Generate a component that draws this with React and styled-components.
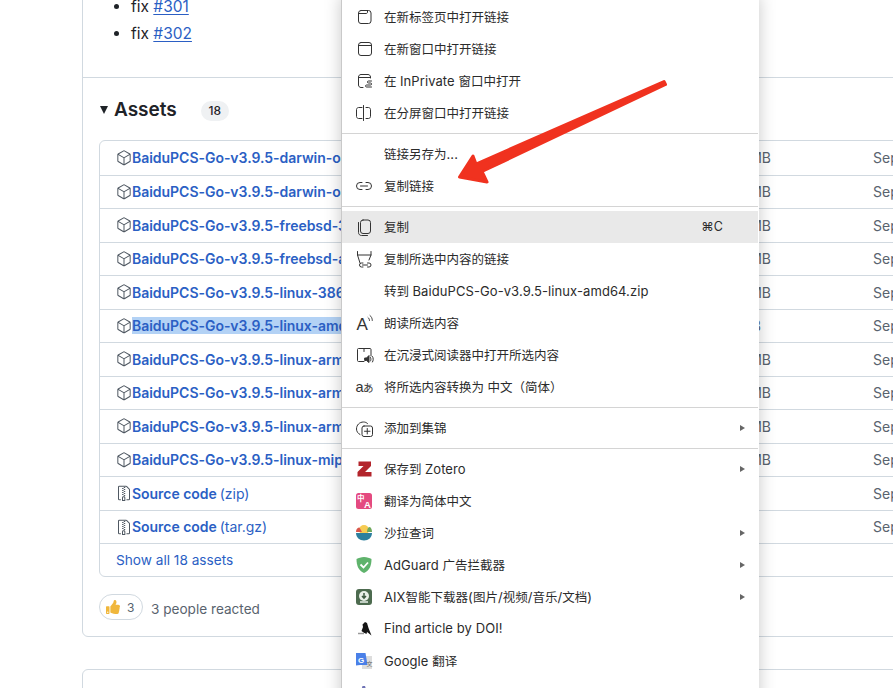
import React from "react";
import styled, { createGlobalStyle } from "styled-components";
import { GoPackage, GoFileZip } from "react-icons/go";
import { FaThumbsUp } from "react-icons/fa";

const GlobalStyle = createGlobalStyle`
  html, body {
    margin: 0;
    padding: 0;
    background: #fff;
  }
  body {
    font-family: Inter, "Liberation Sans", sans-serif;
    color: #1f2328;
  }
`;

const Page = styled.div`
  position: relative;
  width: 893px;
  height: 688px;
  overflow: hidden;
  padding-left: 82px;
  box-sizing: border-box;
`;

const Card = styled.section`
  width: 1000px;
  box-sizing: border-box;
  border: 1px solid #d1d9e0;
  border-radius: 6px;
  margin-top: -30px;
  height: 667px;
`;

const NextCard = styled.section`
  width: 1000px;
  height: 60px;
  box-sizing: border-box;
  border: 1px solid #d1d9e0;
  border-radius: 6px;
  margin-top: 32px;
`;

const Notes = styled.div`
  height: 107px;
  box-sizing: border-box;
  border-bottom: 1px solid #d1d9e0;
`;

const List = styled.ul`
  margin: 0;
  padding: 22px 0 0 48px;
  list-style: disc;
  font-size: 15.5px;
  line-height: 27px;
`;

const IssueLink = styled.a`
  color: #2b5fc4;
  text-decoration: underline;
  text-underline-offset: 2px;
`;

const Assets = styled.div`
  padding: 0 16px;
`;

const AssetsHead = styled.div`
  display: flex;
  align-items: center;
  height: 22px;
  margin-top: 20px;
`;

const Caret = styled.span`
  width: 0;
  height: 0;
  border-left: 4.5px solid transparent;
  border-right: 4.5px solid transparent;
  border-top: 8px solid #1f2328;
  margin: 2px 6px 0 1px;
`;

const AssetsTitle = styled.h3`
  margin: 2px 0 0;
  font-size: 19px;
  line-height: 22px;
  font-weight: 600;
`;

const CountBadge = styled.span`
  margin-left: 24px;
  margin-top: 4px;
  width: 28px;
  height: 20px;
  border-radius: 10px;
  background: #eff1f3;
  font-size: 12px;
  font-weight: 500;
  line-height: 20px;
  text-align: center;
`;

const AssetBox = styled.div`
  margin-top: 20px;
  border: 1px solid #d1d9e0;
  border-radius: 6px;
`;

const AssetRow = styled.div`
  display: grid;
  grid-template-columns: 551px 120px 102px 1fr;
  align-items: center;
  height: 33.5px;
  box-sizing: border-box;
  font-size: 14px;
  & + & {
    border-top: 1px solid #d1d9e0;
  }
`;

const AssetName = styled.a`
  display: flex;
  align-items: center;
  padding-left: 16px;
  color: #2b5fc4;
  font-weight: 600;
  letter-spacing: -0.03px;
  white-space: nowrap;
  svg {
    color: #4f5862;
    flex: none;
  }
`;

const Ext = styled.span`
  font-weight: 400;
  margin-left: 3px;
`;

const AssetSize = styled.span`
  color: #59636e;
  text-align: right;
  white-space: nowrap;
  padding-right: ${(p) => (p.$selected ? "10px" : "0")};
`;

const AssetDate = styled.span`
  grid-column: 4;
  color: #59636e;
  white-space: nowrap;
`;

const ShowAll = styled.a`
  display: flex;
  align-items: center;
  height: 32px;
  border-top: 1px solid #d1d9e0;
  padding-left: 16px;
  color: #2b5fc4;
  font-size: 13.65px;
`;

const Reactions = styled.div`
  display: flex;
  align-items: center;
  gap: 8px;
  margin-top: 17px;
  font-size: 13.6px;
  color: #59636e;
`;

const ReactionPill = styled.span`
  display: flex;
  align-items: center;
  gap: 7px;
  width: 44px;
  height: 26px;
  box-sizing: border-box;
  padding-left: 6px;
  border: 1px solid #d1d9e0;
  border-radius: 13px;
  font-size: 12px;
  svg {
    color: #f0b73c;
  }
`;

const ReactedText = styled.span`
  margin-top: 3px;
`;

const Menu = styled.nav`
  position: absolute;
  top: -4px;
  left: 341px;
  width: 418px;
  height: 760px;
  box-sizing: border-box;
  padding: 5px 1px 0 0;
  background: #fff;
  border-left: 1px solid #c9c9c9;
  box-shadow: 0 0 16px rgba(0, 0, 0, 0.22);
  font-family: Inter, "Noto Sans CJK SC", sans-serif;
  font-size: 12.5px;
  color: #2b2b2b;
`;

const MenuRow = styled.div`
  display: flex;
  align-items: center;
  height: 32px;
  padding: 0 10px 0 12px;
  gap: 10px;
  white-space: nowrap;
  background: ${(p) => (p.$active ? "#e9e9e9" : "transparent")};
`;

const IconSlot = styled.span`
  flex: none;
  width: 20px;
  height: 20px;
  display: flex;
  margin-top: -1px;
  svg {
    display: block;
  }
`;

const MenuLabel = styled.span`
  flex: 1;
  padding-bottom: 2px;
`;

const Latin = styled.span`
  font-size: 13px;
  letter-spacing: 0.08px;
`;

const Shortcut = styled.span`
  margin-right: 25px;
  font-size: 12.5px;
  padding-bottom: 2px;
`;

const Chevron = styled.span`
  width: 0;
  height: 0;
  margin-right: 3px;
  border-top: 3.5px solid transparent;
  border-bottom: 3.5px solid transparent;
  border-left: 5px solid #666;
`;

const Separator = styled.div`
  height: 1px;
  margin: 4px 0;
  background: #d4d4d4;
`;

const Arrow = styled.svg`
  position: absolute;
  top: 0;
  left: 0;
  pointer-events: none;
`;

const Line = ({ children }) => (
  <svg width="20" height="20" viewBox="0 0 20 20" fill="none" stroke="#333" strokeWidth="1" strokeLinecap="round" strokeLinejoin="round">
    {children}
  </svg>
);

const NewTabIcon = () => (
  <Line>
    <rect x="4.5" y="3.5" width="12.5" height="13" rx="2.5" />
    <path d="M4.5 6.5H12c1 0 1.5-.5 1.5-1.5V3.5" />
  </Line>
);
const NewWindowIcon = () => (
  <Line>
    <rect x="4.5" y="3.5" width="13" height="13" rx="2.5" />
    <path d="M4.5 6.5h13" />
  </Line>
);
const PrivateIcon = () => (
  <Line>
    <path d="M9 16.500H7c-1.400 0-2.500-1.100-2.500-2.500V6C4.500 4.600 5.600 3.500 7 3.500h7c1.400 0 2.500 1.100 2.500 2.500v1" />
    <path d="M4.500 6.500h12" />
    <path d="M17.500 10h-3c-1.500 0-1.500 2 0 2h2c1.500 0 1.500 2 0 2h-4c-1.300 0-1.300 2 0 2h5" />
  </Line>
);
const SplitIcon = () => (
  <Line>
    <path d="M8 4.500H4.500c-1 0-2 1-2 2v7c0 1 1 2 2 2H8" />
    <path d="M12 4.500h2.500c1 0 2 1 2 2v7c0 1-1 2-2 2H12" />
    <path d="M9.500 2.500v15" />
  </Line>
);
const LinkIcon = () => (
  <Line>
    <path d="M8 6.500H6a3.500 3.500 0 0 0 0 7h2" />
    <path d="M12 6.500h2a3.500 3.500 0 0 1 0 7h-2" />
    <path d="M6.500 10h7" />
  </Line>
);
const CopyIcon = () => (
  <Line>
    <rect x="6.500" y="3" width="10" height="13.500" rx="2.500" />
    <path d="M4.500 5.500v10c0 1.600 1.200 3 3 3h6" />
  </Line>
);
const CopyLinkIcon = () => (
  <Line>
    <path d="M3.500 2.500v3.500l2.500 8M17 2.500V6l-2 5M3.500 6h13.500" />
    <path d="M9 14H7.500a2 2 0 0 0 0 4H9M13.500 14H15a2 2 0 0 1 0 4h-1.500M8.500 16h5" />
  </Line>
);
const ReadIcon = () => (
  <svg width="20" height="20" viewBox="0 0 20 20" fill="none" stroke="#333" strokeWidth="0.9" strokeLinecap="round">
    <text x="2.500" y="16.500" fontFamily="Liberation Sans, sans-serif" fontSize="17" fill="#333" stroke="none">A</text>
    <path d="M14 4.500c1 .8 1.500 1.800 1.500 3M16 2.500c1.500 1.200 2.300 2.800 2.300 5" />
  </svg>
);
const ReaderIcon = () => (
  <Line>
    <path d="M10 16.500H4.500c-.6 0-1-.4-1-1V4.500c0-.6.4-1 1-1h11.500c.6 0 1 .4 1 1V11" />
    <path d="M10 3.500v3" />
    <path d="M11 13h1.500l2.500-2.500v7L12.500 15.500H11z" fill="#333" />
    <path d="M16.500 12.500c.6 1 .6 2.500 0 3.500M18.500 11.500c1 1.500 1 4 0 5.500" />
  </Line>
);
const TranslateGlyph = () => (
  <svg width="20" height="20" viewBox="0 0 20 20">
    <text x="1.500" y="15" fontFamily="Liberation Sans, sans-serif" fontSize="14.500" fill="#333">a</text>
    <text x="9" y="14.500" fontFamily="Noto Sans CJK JP, sans-serif" fontSize="10.500" fill="#333">あ</text>
  </svg>
);
const CollectionIcon = () => (
  <Line>
    <path d="M6 16.500c-2-1-3.500-3-3.500-5.500 0-4 3-7 7-7 1.500 0 3 .5 4 1.500" />
    <rect x="8" y="8" width="10.500" height="10.500" rx="2" />
    <path d="M13.250 10.500v5.500M10.500 13.250H16" />
  </Line>
);
const ZoteroIcon = () => (
  <svg width="20" height="20" viewBox="0 0 20 20">
    <polygon points="4.500,2.500 17,2.500 17,7 11,13 17.500,13 17.500,17.500 3.500,17.500 3.500,13 9.500,7 4.500,7" fill="#b3252c" />
  </svg>
);
const PinkTranslateIcon = () => (
  <svg width="20" height="20" viewBox="0 0 20 20">
    <rect x="2" y="2" width="16" height="16" rx="2.500" fill="#e44a80" />
    <text x="3" y="10" fontFamily="Noto Sans CJK SC, sans-serif" fontSize="7.500" fontWeight="700" fill="#fff">中</text>
    <text x="10" y="17" fontFamily="Liberation Sans, sans-serif" fontSize="9.500" fontWeight="700" fill="#fff">A</text>
  </svg>
);
const SaladIcon = () => (
  <svg width="20" height="20" viewBox="0 0 20 20">
    <circle cx="10" cy="7" r="5" fill="#f6cb52" />
    <path d="M2 9c0-3 1.500-4.500 3.500-4.500L8 9z" fill="#d9564a" />
    <path d="M13 9c0-3 1-5 3-5 1.500 1 2 3 2 5z" fill="#6ea85b" />
    <path d="M2 10h16c0 4.500-3.500 7.500-8 7.500S2 14.500 2 10z" fill="#2c7f9e" />
  </svg>
);
const AdGuardIcon = () => (
  <svg width="20" height="20" viewBox="0 0 20 20">
    <path d="M10 2c3 0 5.500 1 7.500 2 0 7-2 11.500-7.500 14C4.500 15.500 2.500 11 2.500 4c2-1 4.500-2 7.500-2z" fill="#5fb36c" />
    <path d="M6.500 9.500l3 3 4.500-5" fill="none" stroke="#fff" strokeWidth="1.800" />
  </svg>
);
const DownloaderIcon = () => (
  <svg width="20" height="20" viewBox="0 0 20 20">
    <rect x="2" y="2" width="16" height="16" rx="3" fill="#4d6b4f" />
    <circle cx="10" cy="9" r="5" fill="#e9efe8" />
    <path d="M10 6v5M8 9l2 2.200L12 9" fill="none" stroke="#3f5a42" strokeWidth="1.500" />
    <path d="M6 15h8" stroke="#e9efe8" strokeWidth="1.500" />
  </svg>
);
const BirdIcon = () => (
  <svg width="20" height="20" viewBox="0 0 20 20">
    <path d="M8.500 5.500L11 3l2 1 1.500 5 3 7.500-4.500-3.500-.5 2-3-1.500-2-1.500 1.500-4z" fill="#151515" />
    <path d="M4 14.500h6" stroke="#999" strokeWidth="1.500" />
  </svg>
);
const GoogleTranslateIcon = () => (
  <svg width="20" height="20" viewBox="0 0 20 20">
    <rect x="8" y="5" width="10" height="13" fill="#ddd" />
    <path d="M2 2h9.500l2 12H6l-4 .500z" fill="#4a80e8" />
    <text x="4" y="11.500" fontFamily="Liberation Sans, sans-serif" fontSize="8" fontWeight="700" fill="#fff">G</text>
    <text x="12.500" y="15" fontFamily="Noto Sans CJK SC, sans-serif" fontSize="6" fill="#666">文</text>
  </svg>
);
const LastIcon = () => (
  <svg width="20" height="20" viewBox="0 0 20 20">
    <path d="M8.500 3h2.500l1.500 5H7z" fill="#6f73b5" />
  </svg>
);

const assets = [
  { name: "BaiduPCS-Go-v3.9.5-darwin-osx-amd64.zip", size: "9.55 MB" },
  { name: "BaiduPCS-Go-v3.9.5-darwin-osx-arm64.zip", size: "9.21 MB" },
  { name: "BaiduPCS-Go-v3.9.5-freebsd-386.zip", size: "8.96 MB" },
  { name: "BaiduPCS-Go-v3.9.5-freebsd-amd64.zip", size: "9.38 MB" },
  { name: "BaiduPCS-Go-v3.9.5-linux-386.zip", size: "8.97 MB" },
  { name: "BaiduPCS-Go-v3.9.5-linux-amd64.zip", size: "9.4 MB", selected: true },
  { name: "BaiduPCS-Go-v3.9.5-linux-arm64.zip", size: "8.93 MB" },
  { name: "BaiduPCS-Go-v3.9.5-linux-armv5.zip", size: "9.06 MB" },
  { name: "BaiduPCS-Go-v3.9.5-linux-armv7.zip", size: "9.04 MB" },
  { name: "BaiduPCS-Go-v3.9.5-linux-mips.zip", size: "9.51 MB" },
];

const Selected = styled.span`
  background: ${(p) => (p.$on ? "#b3d2f5" : "transparent")};
`;

const menuGroups = [
  [
    { icon: <NewTabIcon />, label: "在新标签页中打开链接" },
    { icon: <NewWindowIcon />, label: "在新窗口中打开链接" },
    { icon: <PrivateIcon />, label: "在 InPrivate 窗口中打开" },
    { icon: <SplitIcon />, label: "在分屏窗口中打开链接" },
  ],
  [
    { label: "链接另存为..." },
    { icon: <LinkIcon />, label: "复制链接" },
  ],
  [
    { icon: <CopyIcon />, label: "复制", active: true, shortcut: "⌘C" },
    { icon: <CopyLinkIcon />, label: "复制所选中内容的链接" },
    { label: "转到 BaiduPCS-Go-v3.9.5-linux-amd64.zip" },
    { icon: <ReadIcon />, label: "朗读所选内容" },
    { icon: <ReaderIcon />, label: "在沉浸式阅读器中打开所选内容" },
    { icon: <TranslateGlyph />, label: "将所选内容转换为 中文（简体）" },
  ],
  [{ icon: <CollectionIcon />, label: "添加到集锦", sub: true }],
  [
    { icon: <ZoteroIcon />, label: "保存到 Zotero", sub: true },
    { icon: <PinkTranslateIcon />, label: "翻译为简体中文" },
    { icon: <SaladIcon />, label: "沙拉查词", sub: true },
    { icon: <AdGuardIcon />, label: "AdGuard 广告拦截器", sub: true },
    { icon: <DownloaderIcon />, label: "AIX智能下载器(图片/视频/音乐/文档)", sub: true },
    { icon: <BirdIcon />, label: "Find article by DOI!" },
    { icon: <GoogleTranslateIcon />, label: "Google 翻译" },
    { icon: <LastIcon />, label: "" },
  ],
];

// latin runs in the menu are a bit bigger than the chinese ones
const menuText = (label) =>
  label.split(/([\x21-\x7e][\x20-\x7e]*)/).map((part, i) =>
    i % 2 ? <Latin key={i}>{part}</Latin> : part
  );

const App = () => {
  return (
    <Page>
      <GlobalStyle />
      <Card>
        <Notes>
          <List>
            <li>fix <IssueLink>#301</IssueLink></li>
            <li>fix <IssueLink>#302</IssueLink></li>
          </List>
        </Notes>
        <Assets>
          <AssetsHead>
            <Caret />
            <AssetsTitle>Assets</AssetsTitle>
            <CountBadge>18</CountBadge>
          </AssetsHead>
          <AssetBox>
            {assets.map((a) => (
              <AssetRow key={a.name}>
                <AssetName>
                  <GoPackage size={16} />
                  <Selected $on={a.selected}>{a.name}</Selected>
                </AssetName>
                <AssetSize $selected={a.selected}>{a.size}</AssetSize>
                <AssetDate>Sep 3, 2023</AssetDate>
              </AssetRow>
            ))}
            <AssetRow>
              <AssetName>
                <GoFileZip size={16} />
                Source code<Ext>(zip)</Ext>
              </AssetName>
              <AssetDate>Sep 3, 2023</AssetDate>
            </AssetRow>
            <AssetRow>
              <AssetName>
                <GoFileZip size={16} />
                Source code<Ext>(tar.gz)</Ext>
              </AssetName>
              <AssetDate>Sep 3, 2023</AssetDate>
            </AssetRow>
            <ShowAll>Show all 18 assets</ShowAll>
          </AssetBox>
          <Reactions>
            <ReactionPill>
              <FaThumbsUp size={14} />3
            </ReactionPill>
            <ReactedText>3 people reacted</ReactedText>
          </Reactions>
        </Assets>
      </Card>
      <NextCard />
      <Menu>
        {menuGroups.map((group, i) => (
          <React.Fragment key={i}>
            {i > 0 && <Separator />}
            {group.map((item) => (
              <MenuRow key={item.label} $active={item.active}>
                <IconSlot>{item.icon}</IconSlot>
                <MenuLabel>{menuText(item.label)}</MenuLabel>
                {item.shortcut && <Shortcut>{item.shortcut}</Shortcut>}
                {item.sub && <Chevron />}
              </MenuRow>
            ))}
          </React.Fragment>
        ))}
      </Menu>
      <Arrow width="893" height="688" viewBox="0 0 893 688">
        <polygon points="459.500,177 473,156 476,164 664,81.500 665.500,84.500 482,171.500 487,182" fill="#f0321f" stroke="#f0321f" strokeWidth="3" strokeLinejoin="round" />
      </Arrow>
    </Page>
  );
};

export default App;
